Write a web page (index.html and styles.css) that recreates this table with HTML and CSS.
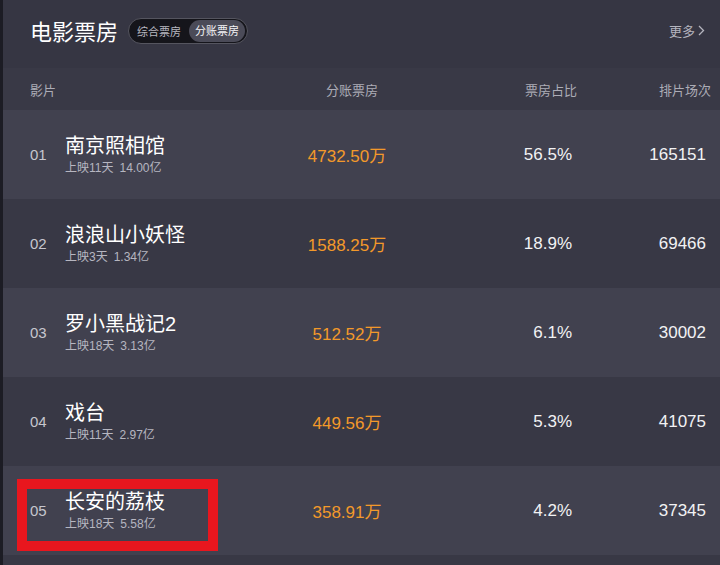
FILE: index.html
```html
<!DOCTYPE html>
<html lang="zh-CN">
<head>
  <meta charset="UTF-8" />
  <meta name="viewport" content="width=device-width, initial-scale=1.0"/>
  <title>电影票房</title>
  <link rel="stylesheet" href="styles.css">
</head>
<body>
  <div class="board">
    <div class="top">
      <h1>电影票房</h1>
      <div class="tabs">
        <span class="tab">综合票房</span>
        <span class="tab active">分账票房</span>
      </div>
      <a class="more">更多<svg width="7" height="11" viewBox="0 0 7 11"><path d="M1 1l4.5 4.5L1 10" fill="none" stroke="currentColor" stroke-width="1.3"/></svg></a>
    </div>

    <div class="row head">
      <span class="film">影片</span>
      <span class="box">分账票房</span>
      <span class="pct">票房占比</span>
      <span class="cnt">排片场次</span>
    </div>

    <div class="row">
      <span class="num">01</span>
      <div class="film"><div class="name">南京照相馆</div><div class="sub">上映11天<i>14.00亿</i></div></div>
      <span class="box">4732.50万</span>
      <span class="pct">56.5%</span>
      <span class="cnt">165151</span>
    </div>
    <div class="row">
      <span class="num">02</span>
      <div class="film"><div class="name">浪浪山小妖怪</div><div class="sub">上映3天<i>1.34亿</i></div></div>
      <span class="box">1588.25万</span>
      <span class="pct">18.9%</span>
      <span class="cnt">69466</span>
    </div>
    <div class="row">
      <span class="num">03</span>
      <div class="film"><div class="name">罗小黑战记2</div><div class="sub">上映18天<i>3.13亿</i></div></div>
      <span class="box">512.52万</span>
      <span class="pct">6.1%</span>
      <span class="cnt">30002</span>
    </div>
    <div class="row">
      <span class="num">04</span>
      <div class="film"><div class="name">戏台</div><div class="sub">上映11天<i>2.97亿</i></div></div>
      <span class="box">449.56万</span>
      <span class="pct">5.3%</span>
      <span class="cnt">41075</span>
    </div>
    <div class="row">
      <span class="num">05</span>
      <div class="film"><div class="name">长安的荔枝</div><div class="sub">上映18天<i>5.58亿</i></div></div>
      <span class="box">358.91万</span>
      <span class="pct">4.2%</span>
      <span class="cnt">37345</span>
      <div class="mark"></div>
    </div>
  </div>
</body>
</html>
```

FILE: styles.css
```css
body {
  margin: 0;
  background: #383845;
  font-family: 'Liberation Sans', 'Noto Sans CJK SC', sans-serif;
  color: #f2f2f4;
}

.board {
  border-left: 3px solid #1c1c24;
  height: 565px;
  background: #383845;
  overflow: hidden;
}

.top {
  height: 68px;
  display: flex;
  align-items: center;
  padding: 0 15px 0 27px;
  background: #363643;
}

h1 {
  margin: 0 10px 0 0;
  font-size: 22px;
  font-weight: normal;
  color: #ffffff;
  position: relative;
  top: -4px;
}

.tabs {
  display: flex;
  align-items: center;
  height: 24px;
  padding: 0 2px 0 8px;
  border: 1px solid #55555f;
  border-radius: 13px;
  background: #15151b;
  position: relative;
  top: -3px;
}

.tab {
  font-size: 11px;
  color: #b8b8c0;
  margin-right: 8px;
}

.tab.active {
  margin-right: 0;
  padding: 0 6px;
  height: 22px;
  line-height: 22px;
  border-radius: 11px;
  background: #4b4b58;
  color: #f4f4f6;
}

.more {
  margin-left: auto;
  font-size: 13px;
  color: #b4b4be;
  display: flex;
  align-items: center;
  gap: 3px;
  position: relative;
  top: -4px;
}

.row {
  position: relative;
  display: grid;
  grid-template-columns: 35px 212px 140px 155px 134px;
  align-items: center;
  height: 89px;
  padding-left: 27px;
}

.row:nth-child(odd) {
  background: #41414f;
}

.row.head {
  height: 42px;
  background: #393946;
  font-size: 13px;
  color: #acacb6;
}

.row.head .film {
  grid-column: 1 / 3;
}

.row.head .box {
  padding-left: 10px;
}

.row.head .pct,
.row.head .cnt {
  margin-right: -5px;
}

.num {
  font-size: 15px;
  color: #c6c6ce;
}

.name {
  font-size: 20px;
  color: #ffffff;
  line-height: 24px;
}

.sub {
  font-size: 12px;
  color: #b6b6c0;
  line-height: 16px;
  margin-top: 2px;
}

.sub i {
  font-style: normal;
  margin-left: 6px;
}

.box {
  text-align: center;
  font-size: 17px;
  color: #f3992a;
}

.head .box {
  color: #acacb6;
  font-size: 13px;
}

.pct,
.cnt {
  text-align: right;
  font-size: 17px;
}

.head .pct,
.head .cnt {
  font-size: 13px;
}

.mark {
  position: absolute;
  left: 14px;
  top: 13px;
  width: 181px;
  height: 52px;
  border: 10px solid #e8161e;
}
```
